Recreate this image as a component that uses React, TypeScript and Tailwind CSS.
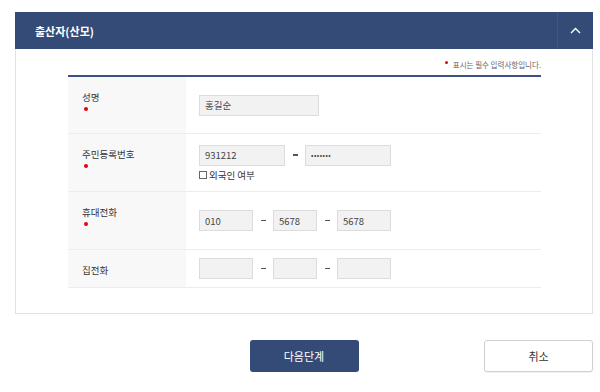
import React from "react";

const font = { fontFamily: '"Noto Sans CJK KR", "Noto Sans", sans-serif' };

const Dot = () => <span className="block w-[4px] h-[4px] rounded-full bg-[#e60012] mt-[4px] ml-[2px]" />;

const Field = ({ w, value, extra = "text-[9.5px]" }: { w: string; value?: string; extra?: string }) => (
  <input
    readOnly
    value={value ?? ""}
    className={`${w} ${extra} h-[21px] border border-[#dcdcdc] bg-[#f2f2f2] px-[5px] text-[#444] focus:outline-none`}
    style={font}
  />
);

const Dash = () => (
  <span className="w-[20px] flex justify-center">
    <span className="block w-[5px] h-[1.5px] bg-[#555]" />
  </span>
);

const Row = ({ label, required, h, children }: any) => (
  <div className={`flex border-b border-[#ececec] ${h}`}>
    <div className="w-[118px] bg-[#f8f8f8] pl-[14px] pt-[14px]">
      <p className="text-[9.5px] leading-[12px] text-[#333]">{label}</p>
      {required && <Dot />}
    </div>
    <div className="flex-1 pl-[13px] flex flex-col justify-center">{children}</div>
  </div>
);

export default function App() {
  return (
    <div className="w-[600px] h-[392px] bg-white pt-[12px]" style={font}>
      <div className="ml-[15px] w-[578px] border border-[#e2e2e2]">
        {/* header */}
        <div className="h-[37px] bg-[#354b77] flex items-center justify-between -mx-px -mt-px">
          <p className="pl-[20px] pt-[1px] text-[11px] font-bold text-white">출산자(산모)</p>
          <div className="w-[36px] h-full border-l border-[#40568a] flex items-center justify-center">
            <svg width="11" height="7" viewBox="0 0 11 7" fill="none">
              <polyline points="1,6 5.5,1.5 10,6" stroke="#fff" strokeWidth="1.4" />
            </svg>
          </div>
        </div>
        {/* body */}
        <div className="pl-[52px] pr-[51px] pt-[8px] pb-[25px]">
          <div className="h-[16px] flex items-center justify-end gap-[5px]">
            <span className="block w-[3px] h-[3px] rounded-full bg-[#e60012] -mt-[5px]" />
            <span className="text-[7.5px] text-[#666]">표시는 필수 입력사항입니다.</span>
          </div>
          <div className="mt-[2px] border-t-2 border-[#3b5282]">
            <Row label="성명" required h="h-[57px]">
              <Field w="w-[120px]" value="홍길순" />
            </Row>
            <Row label="주민등록번호" required h="h-[58px]">
              <div className="flex items-center">
                <Field w="w-[86px]" value="931212" />
                <Dash />
                <Field w="w-[86px]" value="•••••••" extra="text-[7px] tracking-[0.5px]" />
              </div>
              <label className="flex items-center gap-[2px] mt-[3px] text-[9.5px] leading-[12px] text-[#333]">
                <input type="checkbox" className="appearance-none w-[8px] h-[8px] border border-[#666] bg-white" />
                외국인 여부
              </label>
            </Row>
            <Row label="휴대전화" required h="h-[58px]">
              <div className="flex items-center">
                <Field w="w-[54px]" value="010" />
                <Dash />
                <Field w="w-[44px]" value="5678" />
                <Dash />
                <Field w="w-[54px]" value="5678" />
              </div>
            </Row>
            <Row label="집전화" h="h-[38px]">
              <div className="flex items-center">
                <Field w="w-[54px]" />
                <Dash />
                <Field w="w-[44px]" />
                <Dash />
                <Field w="w-[54px]" />
              </div>
            </Row>
          </div>
        </div>
      </div>
      {/* buttons */}
      <div className="ml-[15px] w-[578px] mt-[26px] flex justify-between items-center">
        <span className="w-[109px]" />
        <button className="w-[109px] h-[32px] rounded-[3px] bg-[#354b77] text-white text-[11px]">다음단계</button>
        <button className="w-[109px] h-[32px] rounded-[3px] bg-white border border-[#cfcfcf] text-[#333] text-[11px] shadow-[0_1px_1px_rgba(0,0,0,0.06)]">취소</button>
      </div>
    </div>
  );
}
